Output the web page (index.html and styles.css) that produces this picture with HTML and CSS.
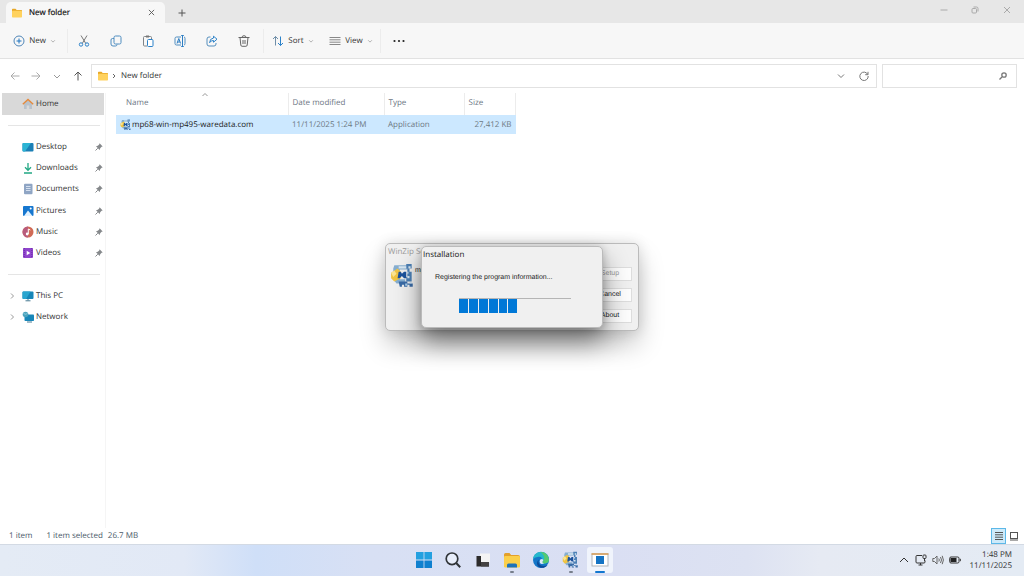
FILE: index.html
```html
<!DOCTYPE html>
<html lang="en">
  <head>
    <meta charset="UTF-8" />
    <title>New folder</title>
    <link rel="stylesheet" href="styles.css">
  </head>

  <body>
    <!-- shared icons -->
    <svg class="sprite" aria-hidden="true">
      <symbol id="folder" viewBox="0 0 12 12">
        <path d="M1 2.5q0-.7.7-.7h2.8l1.2 1.2h4.6q.7 0 .7.7V5H1z" fill="#e8a828" />
        <rect x="1" y="3.8" width="10" height="6.6" rx=".7" fill="#ffd25e" />
      </symbol>
      <symbol id="chev" viewBox="0 0 8 8">
        <path d="M1.5 3 4 5.5 6.500 3" fill="none" stroke="currentColor" />
      </symbol>
      <symbol id="pin" viewBox="0 0 10 10">
        <path d="M5.600 1.300 8.700 4.400 7.600 4.800 6.200 6.200 5.700 8 2 4.300 3.800 3.800 5.200 2.400z" fill="#85888b" />
        <path d="M3.800 6.200 1.500 8.500" stroke="#85888b" stroke-width="1" />
      </symbol>
      <symbol id="winzip" viewBox="0 0 24 24">
        <path d="M4 2h12v4H9v9h5v4H6l-3-4V5z" fill="#86aed0" />
        <path d="M15 1h5v4h-2v3h2v9h-5v-4h1V5h-1z" fill="#4c80b6" />
        <path d="M8 3h7v2H8zM17 3h2v2h-2zM16 8h1v2h-1zM16 12h2v2h-2z" fill="#d8e7f2" />
        <path d="M1 9 7 5l3 3v6l-6 3-3-3z" fill="#f0c443" />
        <path d="m1 9 3-2 2 3-3 3z" fill="#fae492" />
        <path d="M8 8h2l1 2 2-2h2v6h-2l-2-2-2 2H7z" fill="#1b529c" />
        <path d="M8 17h8v2h5v3h-3v-2h-2v2h-3v-2h-2v2H9z" fill="#3a6ba6" />
        <path d="M14 19h2v2h-2zM18 18h2v1h-2z" fill="#a9d0ef" />
      </symbol>
    </svg>

    <div class="window">
      <div class="tabs">
        <div class="tab">
          <svg class="icon"><use href="#folder" /></svg>
          <span>New folder</span>
          <button class="close" aria-label="Close tab">
            <svg viewBox="0 0 8 8"><path d="m1 1 6 6M7 1 1 7" /></svg>
          </button>
        </div>
        <button class="add" aria-label="New tab">
          <svg viewBox="0 0 8 8"><path d="M4 .5v7M.5 4h7" /></svg>
        </button>
        <div class="controls">
          <button aria-label="Minimize"><svg viewBox="0 0 8 8"><path d="M.5 4h7" /></svg></button>
          <button aria-label="Restore"><svg viewBox="0 0 8 8"><rect x="1" y="2.500" width="4.500" height="4.500" rx="1" /><path d="M2.500 1h3Q7 1 7 2.500v3" /></svg></button>
          <button aria-label="Close"><svg viewBox="0 0 8 8"><path d="m1 1 6 6M7 1 1 7" /></svg></button>
        </div>
      </div>

      <div class="toolbar">
        <button class="new">
          <svg class="icon" viewBox="0 0 12 12"><circle cx="6" cy="6" r="5" stroke="#4f86b8" /><path d="M6 3.500v5M3.500 6h5" stroke="#1f74c0" /></svg>
          New
          <svg class="drop"><use href="#chev" /></svg>
        </button>
        <div class="group">
          <button aria-label="Cut"><svg class="icon" viewBox="0 0 12 12"><path d="m3 .5 4.800 8M9 .5l-4.800 8" stroke="#777" /><circle cx="3" cy="9.500" r="1.700" stroke="#2c82c9" /><circle cx="9" cy="9.500" r="1.700" stroke="#2c82c9" /></svg></button>
          <button aria-label="Copy"><svg class="icon" viewBox="0 0 12 12"><path d="M4 3.500H2.500Q1 3.500 1 5v4q0 2 2 2h2.500Q7 11 7 9.500" stroke="#4f8dc0" /><rect x="4" y="1" width="7" height="8" rx="1.500" stroke="#4f8dc0" /></svg></button>
          <button aria-label="Paste"><svg class="icon" viewBox="0 0 12 12"><path d="M5 11H2.500Q1.500 11 1.500 10V2.500q0-1 1-1h6q1 0 1 1V4" stroke="#808488" /><path d="M4 1.500h3" stroke="#777" stroke-width="2" /><rect x="5.500" y="4.500" width="5.500" height="7" rx="1" fill="#fff" stroke="#2c82c9" /></svg></button>
          <button aria-label="Rename"><svg class="icon" viewBox="0 0 12 12"><path d="M7 2H2.500Q1 2 1 3.500v5Q1 10 2.500 10H7M10 2q1 0 1 1.500v5q0 1.500-1 1.500" stroke="#4f8dc0" /><path d="M7.200.5h2.600M7.200 11.500h2.600M8.500.5v11M3 8.500l1.800-5 1.800 5M3.700 7h2.200" stroke="#2c7ec4" /></svg></button>
          <button aria-label="Share"><svg class="icon" viewBox="0 0 12 12"><path d="M4.500 2H3Q1 2 1 4v5q0 2 2 2h5q2 0 2-2V8" stroke="#568fbd" /><path d="M7.500 1.200 11 4.200 7.500 7.200V5.500Q5 5.300 3.600 7.700 3.700 3.500 7.500 3z" stroke="#2c82c9" /></svg></button>
          <button aria-label="Delete"><svg class="icon" viewBox="0 0 12 12"><path d="M.5 2.500h11M4 2.500Q4 .7 6 .7t2 1.800M2 2.500 2.800 10q.1 1.300 1.300 1.300h3.800q1.200 0 1.300-1.300L10 2.500M5 5v4M7 5v4" stroke="#666" /></svg></button>
        </div>
        <div class="group menus">
          <button>
            <svg class="icon" viewBox="0 0 12 12"><path d="M3.500 10.500v-9M1 4l2.500-2.500L6 4" stroke="#6f8ea8" /><path d="M8.500 1.500v9M6 8l2.500 2.500L11 8" stroke="#2c82c9" /></svg>
            Sort
            <svg class="drop"><use href="#chev" /></svg>
          </button>
          <button>
            <svg class="icon" viewBox="0 0 12 12"><path d="M.5 2.500h11M.5 4.800h11M.5 7.200h11M.5 9.500h11" stroke="#888" /></svg>
            View
            <svg class="drop"><use href="#chev" /></svg>
          </button>
        </div>
        <button class="more" aria-label="More"><svg class="icon" viewBox="0 0 12 12"><g fill="#222"><circle cx="1.500" cy="6" r="1.100" /><circle cx="6" cy="6" r="1.100" /><circle cx="10.500" cy="6" r="1.100" /></g></svg></button>
      </div>

      <div class="nav">
        <div class="arrows">
          <button aria-label="Back"><svg viewBox="0 0 10 10"><path d="M9.500 5H1M4.500 1.500 1 5l3.500 3.500" stroke="#aaa" /></svg></button>
          <button aria-label="Forward"><svg viewBox="0 0 10 10"><path d="M.5 5H9M5.500 1.500 9 5 5.500 8.500" stroke="#aaa" /></svg></button>
          <button aria-label="Recent"><svg viewBox="0 0 10 10"><path d="m2 4 3 3 3-3" stroke="#999" /></svg></button>
          <button aria-label="Up"><svg viewBox="0 0 10 10"><path d="M5 9.500V1M1.500 4.500 5 1l3.500 3.500" stroke="#555" /></svg></button>
        </div>
        <div class="address">
          <svg class="icon"><use href="#folder" /></svg>
          <svg class="crumb" viewBox="0 0 8 8"><path d="M3 2 5 4 3 6" /></svg>
          <span>New folder</span>
          <button class="history" aria-label="Previous locations"><svg viewBox="0 0 10 10"><path d="m2 3.500 3 3 3-3" /></svg></button>
          <button aria-label="Refresh"><svg viewBox="0 0 10 10"><path d="M8.800 3.500A4.200 4.200 0 1 0 9.200 5M9 .8v2.900H6.200" /></svg></button>
        </div>
        <div class="search">
          <input type="text" aria-label="Search New folder" />
          <svg viewBox="0 0 10 10"><circle cx="6" cy="4" r="2.200" stroke-width="1.300" /><path d="M4.200 5.800 1.500 8.500" stroke-width="1.300" /></svg>
        </div>
      </div>

      <div class="content">
        <div class="sidebar">
          <a href="#" class="home">
            <svg class="icon" viewBox="0 0 12 12"><path d="M2 5.500 6 2l4 3.500V11H7.300V7.500H4.700V11H2z" fill="#b9c2cb" /><path d="M.8 6.200 6 1.400l5.200 4.800" fill="none" stroke="#e58a3c" stroke-width="1.400" /></svg>
            Home
          </a>
          <ul class="pinned">
            <li><a href="#">
              <svg class="icon" viewBox="0 0 12 12"><rect x=".5" y="2" width="11" height="8.500" rx="1" fill="#1b7fb5" /><path d="M.5 3q0-1 1-1H9L3 10.500H1.500q-1 0-1-1z" fill="#2cb4d4" /></svg>
              Desktop</a><svg class="pin"><use href="#pin" /></svg></li>
            <li><a href="#">
              <svg class="icon" viewBox="0 0 12 12"><path d="M6 1v7M3 5.300l3 3 3-3M2 11h8" fill="none" stroke="#22a884" stroke-width="1.300" /></svg>
              Downloads</a><svg class="pin"><use href="#pin" /></svg></li>
            <li><a href="#">
              <svg class="icon" viewBox="0 0 12 12"><rect x="2" y=".8" width="8.500" height="10.500" rx="1" fill="#8fa5c4" /><path d="M4 3.500h4.500M4 5.500h4.500M4 7.500h4.500" stroke="#d5e0ef" /></svg>
              Documents</a><svg class="pin"><use href="#pin" /></svg></li>
            <li><a href="#">
              <svg class="icon" viewBox="0 0 12 12"><rect x="1" y="1" width="10.500" height="10" rx="1" fill="#1677cf" /><path d="M2 11 6 5.500l4.500 5.500z" fill="#e2f2ff" /><circle cx="8.700" cy="3.600" r="1" fill="#fff" /></svg>
              Pictures</a><svg class="pin"><use href="#pin" /></svg></li>
            <li><a href="#">
              <svg class="icon" viewBox="0 0 12 12"><circle cx="6" cy="6" r="5.500" fill="#d06a55" /><path d="M6 .5A5.500 5.500 0 0 0 6 11.500z" fill="#b95c7c" /><path d="M6.300 8V3l2 1" fill="none" stroke="#fff" /><circle cx="5.200" cy="8" r="1.400" fill="#fff" /></svg>
              Music</a><svg class="pin"><use href="#pin" /></svg></li>
            <li><a href="#">
              <svg class="icon" viewBox="0 0 12 12"><rect x="1" y="1" width="10" height="10" rx="1" fill="#8f45cc" /><path d="M2.200 1v10M9.800 1v10" stroke="#6c2ba8" stroke-dasharray="1 1" /><path d="m4.700 3.700 3.600 2.300-3.600 2.300z" fill="#fff" /></svg>
              Videos</a><svg class="pin"><use href="#pin" /></svg></li>
          </ul>
          <ul class="places">
            <li><svg class="expand" viewBox="0 0 8 8"><path d="M3 1.500 5.500 4 3 6.500" /></svg><a href="#">
              <svg class="icon" viewBox="0 0 12 12"><rect x=".5" y="1.500" width="11" height="7.500" rx="1" fill="#1786b8" /><path d="M.5 2.500q0-1 1-1h7L4 9H1.500q-1 0-1-1z" fill="#2ba6cf" /><path d="M6 9v1.500M3.500 10.800h5" stroke="#4b7d94" /></svg>
              This PC</a></li>
            <li><svg class="expand" viewBox="0 0 8 8"><path d="M3 1.500 5.500 4 3 6.500" /></svg><a href="#">
              <svg class="icon" viewBox="0 0 12 12"><rect x="2.500" y="3.500" width="9.500" height="6.500" rx=".8" fill="#1786b8" /><path d="M5 11h5" stroke="#4b7d94" /><circle cx="3.500" cy="3.500" r="2.800" fill="#4aa3bd" /><path d="M1.500 2.500q2 1.500 4 0" fill="none" stroke="#a8d5e4" stroke-width=".7" /></svg>
              Network</a></li>
          </ul>
        </div>

        <div class="files">
          <svg class="sorted" viewBox="0 0 8 8"><path d="M1.500 5 4 2.500 6.500 5" /></svg>
          <table>
            <thead>
              <tr><th class="col-name">Name</th><th class="col-date">Date modified</th><th class="col-type">Type</th><th class="col-size">Size</th></tr>
            </thead>
            <tbody>
              <tr>
                <td class="name"><div><svg class="icon"><use href="#winzip" /></svg>mp68-win-mp495-waredata.com</div></td>
                <td>11/11/2025 1:24 PM</td>
                <td>Application</td>
                <td class="size">27,412 KB</td>
              </tr>
            </tbody>
          </table>
        </div>
      </div>

      <div class="status">
        <span>1 item</span>
        <span class="selected">1 item selected</span>
        <span>26.7 MB</span>
        <div class="views">
          <button class="active" aria-label="Details"><svg viewBox="0 0 10 10"><path d="M1 1.500h8M1 3.800h8M1 6.200h8M1 8.500h8" /></svg></button>
          <button aria-label="Large icons"><svg viewBox="0 0 10 10"><rect x="1.500" y="1.500" width="7" height="6" /><path d="M1 9h8" /></svg></button>
        </div>
      </div>
    </div>

    <!-- WinZip window behind the progress dialog -->
    <div class="dialog winzip">
      <h2>WinZip Se</h2>
      <div class="winzip-body">
        <svg class="logo"><use href="#winzip" /></svg>
        <p>mp</p>
        <div class="buttons">
          <button disabled>Setup</button>
          <button>Cancel</button>
          <button>About</button>
        </div>
      </div>
    </div>

    <div class="dialog install">
      <h2>Installation</h2>
      <p>Registering the program information...</p>
      <div class="progress" role="progressbar" aria-label="Installation progress">
        <div class="bar" style="width: 52%"><i></i><i></i><i></i><i></i><i></i><i></i></div>
      </div>
    </div>

    <div class="taskbar">
      <div class="apps">
        <button aria-label="Start"><svg viewBox="0 0 18 18"><path d="M1 1h7.600v7.600H1zM9.400 1H17v7.600H9.400z" fill="#24a0e0" /><path d="M1 9.400h7.600V17H1zM9.400 9.400H17V17H9.400z" fill="#0f80cf" /></svg></button>
        <button aria-label="Search"><svg viewBox="0 0 18 18"><circle cx="8" cy="7.800" r="5.800" fill="#e8eefb" stroke="#303438" stroke-width="1.700" /><path d="m12.200 12 4 4.200" stroke="#303438" stroke-width="2" /></svg></button>
        <button aria-label="Task view"><svg viewBox="0 0 18 18"><rect x="6" y="2.500" width="10" height="9" fill="#f4f4f4" /><path d="M2.500 5H7v6h8v4.500H2.500z" fill="#2c2b2b" /><path d="M7 11h8v4.500H7z" fill="#454343" /></svg></button>
        <button class="running" aria-label="File Explorer"><svg viewBox="0 0 18 18"><path d="M1 3.500Q1 2 2.500 2h4l1.600 2H15q2 0 2 2v2H1z" fill="#e3a02c" /><rect x="1" y="5" width="16" height="11.500" rx="1.200" fill="#fbcf4a" /><path d="M4 16.500V14q0-1.500 1.500-1.500h7q1.500 0 1.500 1.500v2.500z" fill="#1d72ba" /></svg></button>
        <button aria-label="Edge"><svg viewBox="0 0 18 18"><circle cx="9" cy="9" r="8" fill="#1476c8" /><path d="M1 9a8 8 0 0 1 16-.5c0 3-2.500 4-5 4-2 0-2.500-1-1.500-2C11 7 9 5.500 6.500 5.800 3.500 6 1.500 7.500 1 9z" fill="#25b8cc" /><path d="M8 1.100A8 8 0 0 1 17 8.500c0 3-2.500 4-5 4-2 0-2.500-1-1.500-2C14 8 12 3 8 1.100z" fill="#55c970" /><path d="M7 8.500c-1.500 3 .5 6.500 5 6.500q2.200 0 3.600-1.300C14 16.500 11 17.300 8 16.500 4.500 15.500 4 10.500 7 8.500z" fill="#0d4b98" /><path d="M8.200 8.500q2-1.200 3 .2.300 1-.7 1.800-1 1 1.500 2-3 1-4-.6-.8-1.700.2-3.400z" fill="#dce8f9" /></svg></button>
        <button class="running" aria-label="WinZip"><svg><use href="#winzip" /></svg></button>
        <button class="current" aria-label="Setup"><svg viewBox="0 0 18 18"><rect x="1" y="3" width="16" height="12" fill="#fff" stroke="#aeb4bb" /><path d="M.5 3h17" stroke="#d99c55" stroke-width="1.500" /><rect x="5" y="5" width="8" height="8" fill="#1473c4" /></svg></button>
      </div>
      <div class="tray">
        <svg viewBox="0 0 12 12"><path d="m2 8 4-4 4 4" /></svg>
        <svg viewBox="0 0 12 12"><path d="M7 1.500H2Q1 1.500 1 2.500v5.500q0 1 1 1h7q1 0 1-1V6.500M3.500 11h4M5.500 9v2" /><rect x="8" y="1" width="3" height="3.500" rx=".8" /><path d="M9.500 4.500V7" /></svg>
        <svg viewBox="0 0 12 12"><path d="M.8 4.500h1.700L5 2v8L2.500 7.500H.8zM6.800 4.500q1 1.500 0 3M8.500 3q2 3 0 6M10.200 1.800q2.400 4.200 0 8.400" stroke="#666" /></svg>
        <svg class="battery" viewBox="0 0 12 12"><rect x=".7" y="3" width="9.300" height="6" rx="1.300" /><rect x="1.500" y="4" width="6" height="4" fill="#222" stroke="none" /><path d="M11.300 4.800v2.400" /></svg>
        <div class="clock">
          <div>1:48 PM</div>
          <div>11/11/2025</div>
        </div>
      </div>
    </div>
  </body>
</html>
```
FILE: styles.css
```css
* {
  box-sizing: border-box;
  margin: 0;
  padding: 0;
}

body {
  display: flex;
  flex-direction: column;
  position: relative;
  min-height: 100vh;
  background-color: #fff;
  color: #333;
  font: 8px/12px "Open Sans", "Noto Sans", sans-serif;
  text-rendering: geometricPrecision;
}

ul {
  list-style: none;
}

a {
  color: inherit;
  text-decoration: none;
}

button {
  display: flex;
  align-items: center;
  justify-content: center;
  border: none;
  background: none;
  color: inherit;
  font: inherit;
  text-rendering: inherit;
}

svg {
  flex: none;
  width: 8px;
  height: 8px;
  fill: none;
  stroke: #999;
}

symbol,
.sidebar .icon {
  stroke: none;
}

.sprite {
  position: absolute;
  width: 0;
  height: 0;
}

.icon {
  width: 12px;
  height: 12px;
  stroke: none;
}

.window {
  display: flex;
  flex: 1;
  flex-direction: column;
}

/* tabs */
.tabs {
  display: flex;
  align-items: flex-end;
  height: 23px;
  padding-left: 6px;
  background-color: #e7e7e7;
}

.tab {
  display: flex;
  align-items: center;
  gap: 6px;
  width: 159px;
  height: 21px;
  padding: 0 10px 0 5px;
  border-radius: 5px 5px 0 0;
  background-color: #f7f7f7;
  color: #111;
  -webkit-text-stroke: 0.2px;
}

.tab svg:not(.icon) {
  width: 7px;
  height: 7px;
}

.tab svg,
.add svg {
  stroke: #555;
}

.close {
  margin-left: auto;
}

.add {
  width: 34px;
  height: 20px;
}

.controls {
  display: flex;
  align-self: flex-start;
  margin-left: auto;
}

.controls button {
  width: 31px;
  height: 20px;
}

.controls button:last-child {
  width: 34px;
}

.controls svg {
  stroke: #aaa;
}

/* toolbar */
.toolbar {
  display: flex;
  align-items: center;
  height: 36px;
  border-bottom: 1px solid #e2e2e2;
  background-color: #f7f7f7;
}

.toolbar .drop {
  width: 6px;
  height: 6px;
  color: #999;
}

.new {
  gap: 4px;
  width: 67px;
  padding-left: 2px;
}

.group {
  display: flex;
  border-left: 1px solid #ececec;
}

.group button {
  width: 32px;
  height: 24px;
}

.menus {
  margin-left: 3px;
  border-right: 1px solid #ececec;
}

.menus button {
  gap: 4px;
  width: 58px;
}

.more {
  width: 35px;
}

/* address row */
.nav {
  display: flex;
  align-items: center;
  height: 34px;
  padding-right: 7px;
}

.arrows {
  display: flex;
  width: 91px;
  padding-left: 4px;
}

.arrows button {
  width: 21px;
  height: 20px;
}

.nav svg:not(.icon, .crumb) {
  width: 10px;
  height: 10px;
}

.address,
.search {
  display: flex;
  align-items: center;
  height: 24px;
  border: 1px solid #e2e2e2;
}

.address {
  flex: 1;
  padding: 0 7px 0 5px;
}

.crumb {
  margin: 0 3px 0 1px;
}

.nav .crumb {
  stroke: #666;
}

.history {
  margin-left: auto;
  margin-right: 13px;
}

.search {
  width: 135px;
  margin-left: 5px;
  padding-right: 8px;
}

.search input {
  flex: 1;
  min-width: 0;
  border: none;
  outline: none;
  background: none;
  font: inherit;
}

.nav .search svg,
.address button svg {
  stroke: #777;
}

/* sidebar */
.content {
  display: flex;
  flex: 1;
}

.sidebar {
  width: 106px;
  padding-left: 2px;
  border-right: 1px solid #f5f5f5;
}

.sidebar a {
  display: flex;
  align-items: center;
  gap: 2px;
}

.home {
  width: 102px;
  height: 22px;
  padding-left: 20px;
  background-color: #d9d9d9;
}

.pinned {
  display: grid;
  grid-auto-rows: 1fr;
  height: 150px;
  margin: 10px 5px 0 6px;
  padding: 10px 0;
  border-top: 1px solid #e5e5e5;
  border-bottom: 1px solid #e5e5e5;
}

.pinned li {
  display: flex;
  align-items: center;
  justify-content: space-between;
  padding-left: 14px;
}

.pin {
  width: 10px;
  height: 10px;
  margin-right: -4px;
}

.places {
  padding-top: 10px;
}

.places li {
  display: flex;
  align-items: center;
  gap: 6px;
  height: 21px;
  padding-left: 6px;
}

/* file list */
.files {
  position: relative;
  padding-left: 10px;
}

.sorted {
  position: absolute;
  top: -2px;
  left: 95px;
}

table {
  width: 400px;
  border-collapse: collapse;
  table-layout: fixed;
}

th {
  height: 22px;
  padding: 0 0 3px 4px;
  border-right: 1px solid #ececec;
  color: #6c7683;
  font-weight: normal;
  text-align: left;
}

td {
  height: 19px;
  padding-left: 4px;
  background-color: #cce8ff;
  color: #6c7883;
}

.col-name {
  width: 172px;
  padding-left: 10px;
}

.col-date {
  width: 96px;
}

.col-type {
  width: 80px;
}

td.name {
  color: #222;
}

.name div {
  display: flex;
  align-items: center;
}

td.size {
  padding-right: 4px;
  text-align: right;
}

/* status bar */
.status {
  display: flex;
  align-items: center;
  height: 16px;
  padding-left: 9px;
  color: #485867;
}

.selected {
  margin: 0 5px 0 14px;
}

.views {
  display: flex;
  margin-left: auto;
  padding-right: 3px;
}

.views button {
  width: 15px;
  height: 16px;
}

.views svg {
  width: 10px;
  height: 10px;
  stroke: #555;
}

.views .active {
  border: 1px solid #5cb8e8;
  background-color: #cdeafa;
}

/* dialogs */
.dialog {
  position: absolute;
  top: calc(50% - 1px);
  left: 50%;
  transform: translate(-50%, -50%);
  border: 1px solid #bbb;
  border-radius: 5px;
  background-color: #f0f0f0;
  color: #222;
  font: 7px/10px "Liberation Sans", Arial, sans-serif;
}

.dialog h2 {
  font: 8px/12px "Open Sans", "Noto Sans", sans-serif;
}

.winzip {
  width: 254px;
  height: 88px;
  padding: 2px 6px 3px 2px;
  box-shadow: 0 14px 26px rgba(0, 0, 0, 0.22), 0 0 14px rgba(0, 0, 0, 0.12);
}

.winzip h2 {
  color: #999;
}

.winzip-body {
  display: flex;
  padding: 5px 0 0 2px;
}

.logo {
  width: 26px;
  height: 26px;
  stroke: none;
}

.winzip p {
  margin: 3px 0 0 -1px;
}

.buttons {
  display: grid;
  gap: 7px;
  margin: 4px 0 0 auto;
}

.buttons button {
  width: 44px;
  height: 14px;
  border: 1px solid #ddd;
  background-color: #fdfdfd;
}

.buttons button:disabled {
  color: #999;
}

.install {
  width: 182px;
  height: 82px;
  padding: 2px 1px;
  box-shadow: 0 14px 26px rgba(0, 0, 0, 0.45), 0 1px 8px rgba(0, 0, 0, 0.2);
}

.install h2 {
  color: #111;
}

.install p {
  margin: 12px 0 0 12px;
}

.progress {
  width: 112px;
  height: 15px;
  margin: 15px 0 0 36px;
  border-top: 1px solid #b5b5b5;
}

.bar {
  display: flex;
  gap: 1px;
  height: 14px;
}

.bar i {
  flex: 1;
  background-color: #0078d7;
}

/* taskbar */
.taskbar {
  display: flex;
  align-items: center;
  justify-content: center;
  position: relative;
  height: 32px;
  padding-bottom: 2px;
  border-top: 1px solid #d3dae4;
  background: linear-gradient(90deg, #e4ebf5, #e2e9f6 18%, #cfdff8 25%, #d8e0f4 36%, #dadff3 60%, #dde2f2 73%, #e6eaf3 80%, #e4ebf4);
}

.apps {
  display: flex;
  gap: 3px;
  width: 203px;
}

.apps button {
  flex: 1;
  position: relative;
  height: 26px;
  border-radius: 3px;
}

.apps svg {
  width: 18px;
  height: 18px;
  stroke: none;
}

.apps .current {
  background-color: #f0f4fc;
}

/* mark under an open app */
.running::after,
.current::after {
  content: "";
  position: absolute;
  bottom: 0;
  width: 4px;
  height: 2px;
  border-radius: 1px;
  background-color: #777f8c;
}

.current::after {
  width: 10px;
  background-color: #1377d0;
}

.tray {
  display: flex;
  align-items: center;
  gap: 5px;
  position: absolute;
  right: 12px;
}

.tray svg {
  width: 12px;
  height: 12px;
  stroke: #333;
}

.clock {
  margin-left: 4px;
  line-height: 11px;
  text-align: right;
}
```
